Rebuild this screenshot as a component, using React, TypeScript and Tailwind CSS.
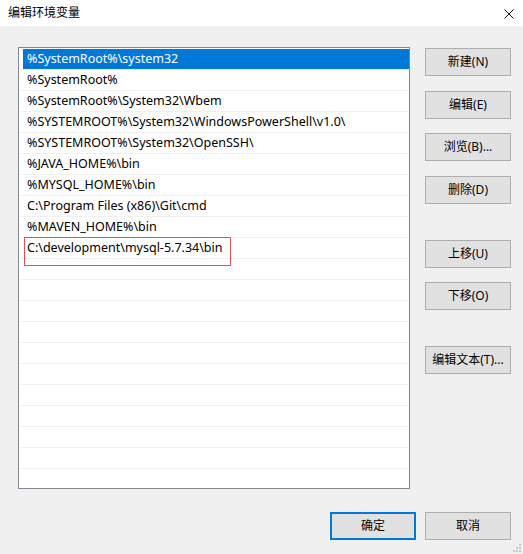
import React from 'react';

const paths = [
  '%SystemRoot%\\system32',
  '%SystemRoot%',
  '%SystemRoot%\\System32\\Wbem',
  '%SYSTEMROOT%\\System32\\WindowsPowerShell\\v1.0\\',
  '%SYSTEMROOT%\\System32\\OpenSSH\\',
  '%JAVA_HOME%\\bin',
  '%MYSQL_HOME%\\bin',
  'C:\\Program Files (x86)\\Git\\cmd',
  '%MAVEN_HOME%\\bin',
  'C:\\development\\mysql-5.7.34\\bin',
];

const TOTAL_ROWS = 21;

function WinButton({ label, className = '' }: { label: string; className?: string }) {
  return (
    <button
      className={`flex h-[28px] w-[86px] items-center justify-center border border-[#adadad] bg-[#e1e1e1] text-[12px] text-black ${className}`}
    >
      {label}
    </button>
  );
}

export default function App() {
  const rows = Array.from({ length: TOTAL_ROWS }, (_, i) => paths[i] ?? '');

  return (
    <div
      className="flex h-[554px] w-[523px] flex-col overflow-hidden bg-[#f0f0f0] text-black"
      style={{ fontFamily: '"Noto Sans", "Noto Sans CJK SC", sans-serif' }}
    >
      {/* title bar */}
      <div className="flex h-[26px] shrink-0 items-center justify-between bg-white pl-[8px] pr-[9px]">
        <span className="text-[12px] leading-none">编辑环境变量</span>
        <svg width="10" height="10" viewBox="0 0 10 10" className="mt-[1px]">
          <path d="M0.5 0.5 L9.5 9.5 M9.5 0.5 L0.5 9.5" stroke="#111" strokeWidth="1" fill="none" />
        </svg>
      </div>

      <div className="relative flex flex-1 flex-col pl-[18px] pt-[21px]">
        <div className="flex">
          {/* path list */}
          <div className="h-[442px] w-[392px] overflow-hidden border border-[#828790] bg-white pt-[1px]">
            {rows.map((p, i) => (
              <div key={i} className="relative mx-[1px] h-[21px] border-b border-[#f0f0f0]">
                <div
                  className={`ml-[3px] -mr-[1px] flex h-[20px] items-center pl-[4px] pt-[1px] text-[12.5px] leading-none ${
                    i === 0 ? 'bg-[#0078d7] text-white' : ''
                  }`}
                >
                  {p}
                </div>
                {i === 9 && (
                  <div className="pointer-events-none absolute left-[4px] top-[-1px] h-[29px] w-[207px] border border-[#e25252]" />
                )}
              </div>
            ))}
          </div>

          {/* side buttons */}
          <div className="ml-[15px] flex flex-col pt-[1px]">
            <WinButton label="新建(N)" />
            <WinButton label="编辑(E)" className="mt-[15px]" />
            <WinButton label="浏览(B)..." className="mt-[14px]" />
            <WinButton label="删除(D)" className="mt-[15px]" />
            <WinButton label="上移(U)" className="mt-[36px]" />
            <WinButton label="下移(O)" className="mt-[14px]" />
            <WinButton label="编辑文本(T)..." className="mt-[36px]" />
          </div>
        </div>

        {/* bottom buttons */}
        <div className="mt-[23px] flex pl-[312px]">
          <button className="flex h-[28px] w-[86px] items-center justify-center border-2 border-[#0078d7] bg-[#e1e1e1] text-[12px]">
            确定
          </button>
          <WinButton label="取消" className="ml-[9px]" />
        </div>

        {/* resize grip */}
        <svg width="10" height="10" viewBox="0 0 10 10" className="absolute bottom-[1px] right-[1px]">
          <rect x="7" y="1" width="2" height="2" fill="#c8c8c8" />
          <rect x="4" y="4" width="2" height="2" fill="#c8c8c8" />
          <rect x="7" y="4" width="2" height="2" fill="#c8c8c8" />
          <rect x="1" y="7" width="2" height="2" fill="#c8c8c8" />
          <rect x="4" y="7" width="2" height="2" fill="#c8c8c8" />
          <rect x="7" y="7" width="2" height="2" fill="#c8c8c8" />
        </svg>
      </div>
    </div>
  );
}
